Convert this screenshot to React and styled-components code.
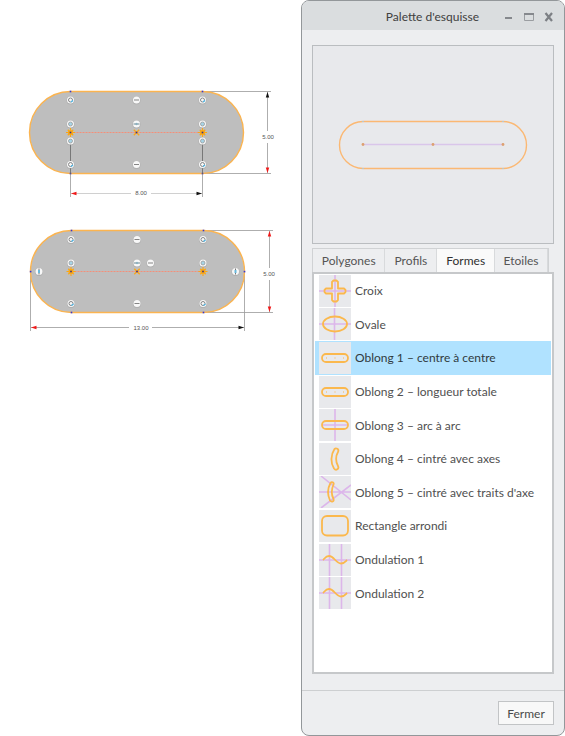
import React, { useState } from 'react'
import styled, { createGlobalStyle } from "styled-components";

const GlobalStyle = createGlobalStyle`
* {
box-sizing: border-box;
}
body {
margin: 0;
background: #fff;
color: #4a4a4a;
font-family: Lato, "Open Sans", sans-serif;
font-size: 12px;
}
button {
font: inherit;
color: inherit;
cursor: pointer;
}
`;

const Page = styled.main`
display: grid;
grid-template-columns: minmax(0, 1fr) 264px;
min-height: 100vh;
`;

const Canvas = styled.section`
display: flex;
flex-direction: column;
gap: 15px;
padding-top: 80px;
`;

const Drawing = styled.svg`
display: block;
width: 100%;
`;

const DimText = styled.text`
font-family: "Liberation Sans", sans-serif;
font-size: 6px;
fill: #555;
text-anchor: middle;
`;

const Dialog = styled.section`
display: flex;
flex-direction: column;
background: #edeef0;
border: 1px solid #93979a;
border-radius: 8px;
overflow: hidden;
`;

const TitleBar = styled.header`
display: flex;
align-items: center;
justify-content: flex-end;
gap: 22px;
height: 29px;
padding: 2px 7px 0 0;
background: #dadddf;
`;

const Title = styled.h1`
margin: 0;
font-size: 12px;
font-weight: 400;
color: #404040;
`;

const WindowButtons = styled.div`
display: flex;
gap: 4px;
`;

const WindowButton = styled.button`
display: flex;
align-items: center;
justify-content: center;
width: 16px;
height: 16px;
padding: 0;
border: 0;
background: none;
`;

const Body = styled.div`
display: flex;
flex: 1;
flex-direction: column;
padding: 15px 10px 16px;
`;

const Preview = styled.div`
border: 1px solid #babdc0;
background: #e8e9ec;
`;

const Tabs = styled.div`
display: flex;
margin: 4px 5px 0 0;
border: 1px solid #d0d2d4;
border-bottom: 0;
`;

const Tab = styled.button`
flex: ${({ $size }) => $size} 1 0;
height: 23px;
padding: 0;
border: 0;
border-right: 1px solid #d8dadc;
background: ${({ $active }) => ($active ? "#fafafa" : "#edeef0")};
color: ${({ $active }) => ($active ? "#303030" : "#555")};
`;

const ListBox = styled.div`
flex: 1;
border: 2px solid #c6c8ca;
background: #fff;
`;

const ShapeList = styled.div`
display: grid;
grid-template-rows: repeat(10, 1fr);
height: 336px;
padding: 0 1px;
`;

const ShapeRow = styled.button`
display: flex;
align-items: center;
gap: 4px;
min-height: 0;
padding: 0 0 0 4px;
border: 0;
background: ${({ $active }) => ($active ? "#b0e2ff" : "transparent")};
color: ${({ $active }) => ($active ? "#303a40" : "#505050")};
white-space: nowrap;
text-align: left;
`;

const Thumb = styled.svg`
flex: none;
width: 32px;
height: 32px;
background: #e8e9ec;
`;

const Footer = styled.footer`
display: flex;
justify-content: flex-end;
padding: 10px;
border-top: 1px solid #cdcfd1;
`;

const CloseButton = styled.button`
width: 56px;
height: 24px;
padding: 0;
border: 1px solid #c2c4c6;
background: #f8f8f8;
`;

const ORANGE = "#fbb84d";
const PURPLE = "#dcb6ea";

// small round constraint markers
function Hint({ x, y, type }) {
  return (
    <g transform={`translate(${x} ${y})`}>
      <circle r="3.9" fill="#9c9c9c" opacity="0.5" cy="0.4" />
      <circle r="3.5" fill="#f8f8f8" />
      {type === "h" && <path d="M-2.5 0H2.5" stroke="#858585" />}
      {type === "mid" && (
        <>
          <path d="M-1.5 0L0 -1.5L1.5 0L0 1.5Z" fill="#a8d8ec" />
          <path d="M-3 0H3" stroke="#6f8993" />
        </>
      )}
      {type === "v" && (
        <>
          <path d="M0 -3V3" stroke="#777" />
          <path d="M0 -1.5V1.5" stroke="#69b9dc" strokeWidth="2" />
        </>
      )}
      {type === "tan" && (
        <>
          <circle r="2" fill="none" stroke="#858585" />
          <path d="M0.5 2L2.5 0.5" stroke="#4bb8ea" strokeWidth="1.2" />
        </>
      )}
      {type === "eq" && <circle r="2" fill="#a6d5e8" stroke="#999" strokeWidth="0.8" />}
    </g>
  );
}

function Star({ x, y, small }) {
  return (
    <g transform={`translate(${x} ${y})`} stroke="#fca713">
      <path d="M-2.7 -2.7L2.7 2.7M-2.7 2.7L2.7 -2.7" strokeWidth="1.3" />
      {!small && <path d="M-4.5 0H4.5M0 -4.5V4.5" strokeWidth="1.1" />}
      {!small && <circle r="2" strokeWidth="1.2" fill="none" />}
      <rect x="-0.8" y="-0.8" width="1.6" height="1.6" fill="#303090" stroke="none" />
    </g>
  );
}

function Arrow({ x, y, angle, color }) {
  return <path d="M0 0L5.5 -1.7V1.7Z" fill={color} transform={`translate(${x} ${y}) rotate(${angle})`} />;
}

function Slot({ x, y }) {
  return (
    <>
      <rect x={x} y={y} width="214" height="82" rx="41" fill="#bebebe" stroke="#fbb450" strokeWidth="1.4" />
      <path d={`M${x + 41} ${y + 41}h132`} stroke="#f58f78" strokeDasharray="2 1" />
      {[0, 82].map((dy) =>
        [41, 173].map((dx) => (
          <rect key={`${dx}-${dy}`} x={x + dx - 0.8} y={y + dy - 0.8} width="1.6" height="1.6" fill="#3535d0" />
        ))
      )}
    </>
  );
}

function CentreSketch() {
  return (
    <Drawing viewBox="0 80 301 125" role="img" aria-label="Oblong 1">
      <g stroke="#999" strokeWidth="0.8" fill="none">
        <path d="M204 91.5H271M204 173.5H271" />
        <path d="M267.5 92V131M267.5 143V173" />
        <path d="M70.5 174V197M202.5 174V197" />
        <path d="M71 193.5H131M151 193.5H202" stroke="#c4c4c4" />
      </g>
      <Slot x={29.5} y={91.5} />
      <path d="M70.5 141V174M202.5 141V174" stroke="#666" strokeWidth="0.8" />
      <Arrow x={267.5} y={92} angle={90} color="#111" />
      <Arrow x={267.5} y={173} angle={-90} color="#f01818" />
      <Arrow x={71} y={193.5} angle={0} color="#f01818" />
      <Arrow x={202} y={193.5} angle={180} color="#111" />
      <DimText x="268" y="139">5.00</DimText>
      <DimText x="141" y="195">8.00</DimText>
      {[70.5, 202.5].map((x) => (
        <g key={x}>
          <Hint x={x} y={100} type="tan" />
          <Hint x={x} y={124} type="eq" />
          <Hint x={x} y={141} type="eq" />
          <Hint x={x} y={164.5} type="tan" />
          <Star x={x} y={132.5} />
        </g>
      ))}
      <Hint x={136.5} y={100} type="h" />
      <Hint x={136.5} y={124} type="mid" />
      <Star x={136.5} y={132.5} small />
      <Hint x={136.5} y={164.5} type="h" />
    </Drawing>
  );
}

function TotalSketch() {
  return (
    <Drawing viewBox="0 220 301 120" role="img" aria-label="Oblong 2">
      <g stroke="#999" strokeWidth="0.8" fill="none">
        <path d="M204 230.5H273M204 312.5H273" />
        <path d="M269.5 231V268M269.5 280V312" />
        <path d="M30.5 272V331M244.5 272V331" />
        <path d="M31 327.5H129M152 327.5H244" />
      </g>
      <Slot x={30.5} y={230.5} />
      <Arrow x={269.5} y={231} angle={90} color="#f01818" />
      <Arrow x={269.5} y={312} angle={-90} color="#f01818" />
      <Arrow x={31} y={327.5} angle={0} color="#f01818" />
      <Arrow x={244} y={327.5} angle={180} color="#111" />
      <DimText x="269" y="276">5.00</DimText>
      <DimText x="141" y="330">13.00</DimText>
      {[71, 203].map((x) => (
        <g key={x}>
          <Hint x={x} y={239.5} type="tan" />
          <Hint x={x} y={263} type="eq" />
          <Hint x={x} y={303.5} type="tan" />
          <Star x={x} y={271.5} />
        </g>
      ))}
      <Hint x={137} y={239.5} type="h" />
      <Hint x={137} y={263} type="mid" />
      <Hint x={150.5} y={263} type="h" />
      <Star x={137} y={271.5} small />
      <Hint x={137} y={303.5} type="h" />
      <Hint x={39} y={271.5} type="v" />
      <Hint x={235.5} y={271.5} type="v" />
      <rect x="29.8" y="270.8" width="1.6" height="1.6" fill="#3535d0" />
      <rect x="243.7" y="270.8" width="1.6" height="1.6" fill="#3535d0" />
    </Drawing>
  );
}

const SLOT = <rect x="3" y="12" width="26" height="8" rx="4" />;
const DOTS = <path d="M7 16h1M15.500 16h1M24 16h1" strokeWidth="1.2" />;
const WAVE = <path d="M4 16C6 14 7 12 10 12C15 12 17 19.500 22 19.500C25 19.500 26 18 28 16" />;
const WAVE_AXES = "M0 16H32M10.500 0V32M22.500 0V32";

const shapes = [
  {
    name: "Croix",
    axes: "M0 16H32M16 0V32",
    drawing: <path strokeLinejoin="round" d="M14.500 5.500H17.500L19 7V13.500H25L26.500 15V17L25 18.500H19V25L17.500 26.500H14.500L13 25V18.500H7L5.500 17V15L7 13.500H13V7Z" />,
  },
  { name: "Ovale", axes: "M0 16H32M15.500 0V32", drawing: <ellipse cx="16" cy="16" rx="12" ry="7.5" /> },
  { name: "Oblong 1 – centre à centre", drawing: <>{SLOT}{DOTS}</> },
  { name: "Oblong 2 – longueur totale", drawing: <>{SLOT}{DOTS}</> },
  { name: "Oblong 3 – arc à arc", axes: "M16 0V32M3 16H29", drawing: SLOT },
  {
    name: "Oblong 4 – cintré avec axes",
    drawing: <path d="M15.500 6C17 4.500 20.500 6 19 9C16.500 13 16.500 19 19 23C20.500 26 17 28 15 25.500C11.500 20 11.500 12 15.500 6Z" />,
  },
  {
    name: "Oblong 5 – cintré avec traits d'axe",
    axes: "M0 16H32M2 0L32 24M2 32L32 9",
    drawing: <path d="M11.500 7C12.500 5.500 15.500 6.500 14.500 8.500C12.500 13 12.500 19 14.500 23C15.500 25.500 12.500 26.500 11 24.500C8.500 19 8.500 12.500 11.500 7Z" />,
  },
  { name: "Rectangle arrondi", drawing: <rect x="3" y="6" width="26" height="19.5" rx="5" /> },
  { name: "Ondulation 1", axes: WAVE_AXES, drawing: WAVE },
  { name: "Ondulation 2", axes: WAVE_AXES, drawing: WAVE },
];

const tabs = [
  { name: "Polygones", size: 73 },
  { name: "Profils", size: 52 },
  { name: "Formes", size: 58 },
  { name: "Etoiles", size: 53 },
];

function App() {
  const [tab, setTab] = useState("Formes");
  const [shape, setShape] = useState("Oblong 1 – centre à centre");

  return (
    <>
      <GlobalStyle />
      <Page>
        <Canvas>
          <CentreSketch />
          <TotalSketch />
        </Canvas>
        <Dialog role="dialog" aria-labelledby="palette-title">
          <TitleBar>
            <Title id="palette-title">Palette d'esquisse</Title>
            <WindowButtons>
              <WindowButton aria-label="Réduire">
                <svg width="10" height="10"><path d="M1 6H8" stroke="#85888d" strokeWidth="2" /></svg>
              </WindowButton>
              <WindowButton aria-label="Agrandir">
                <svg width="10" height="10">
                  <path d="M0.500 1V8.500H9.500V1" fill="none" stroke="#9a9da1" />
                  <path d="M0 2H10" stroke="#85888d" strokeWidth="2" />
                </svg>
              </WindowButton>
              <WindowButton aria-label="Fermer la palette">
                <svg width="10" height="10"><path d="M1.500 1L8 9M8 1L1.500 9" stroke="#7d8085" strokeWidth="2.2" /></svg>
              </WindowButton>
            </WindowButtons>
          </TitleBar>
          <Body>
            <Preview>
              <Drawing viewBox="0 0 240 197" role="img" aria-label={shape}>
                <rect x="26.5" y="75.5" width="187" height="47" rx="23.5" fill="none" stroke="#fbb873" strokeWidth="1.4" />
                <path d="M50 98.500H190" stroke="#d9c6ea" strokeWidth="1.6" />
                {[50, 120, 190].map((x) => (
                  <circle key={x} cx={x} cy="98.5" r="1.4" fill="#dda070" />
                ))}
                <path d="M49 75.500h2M189 75.500h2M49 122.500h2M189 122.500h2" stroke="#b9c6cc" />
              </Drawing>
            </Preview>
            <Tabs role="tablist">
              {tabs.map((item) => (
                <Tab
                  key={item.name}
                  role="tab"
                  aria-selected={tab === item.name}
                  $active={tab === item.name}
                  $size={item.size}
                  onClick={() => setTab(item.name)}
                >
                  {item.name}
                </Tab>
              ))}
            </Tabs>
            <ListBox>
              <ShapeList role="listbox" aria-label="Formes">
                {shapes.map((item) => (
                  <ShapeRow
                    key={item.name}
                    role="option"
                    aria-selected={shape === item.name}
                    $active={shape === item.name}
                    onClick={() => setShape(item.name)}
                  >
                    <Thumb viewBox="0 0 32 32" fill="none" aria-hidden="true">
                      {item.axes && <path d={item.axes} stroke={PURPLE} strokeWidth="1.6" />}
                      <g stroke={ORANGE} strokeWidth="1.8">{item.drawing}</g>
                    </Thumb>
                    {item.name}
                  </ShapeRow>
                ))}
              </ShapeList>
            </ListBox>
          </Body>
          <Footer>
            <CloseButton>Fermer</CloseButton>
          </Footer>
        </Dialog>
      </Page>
    </>
  )
}

export default App;
